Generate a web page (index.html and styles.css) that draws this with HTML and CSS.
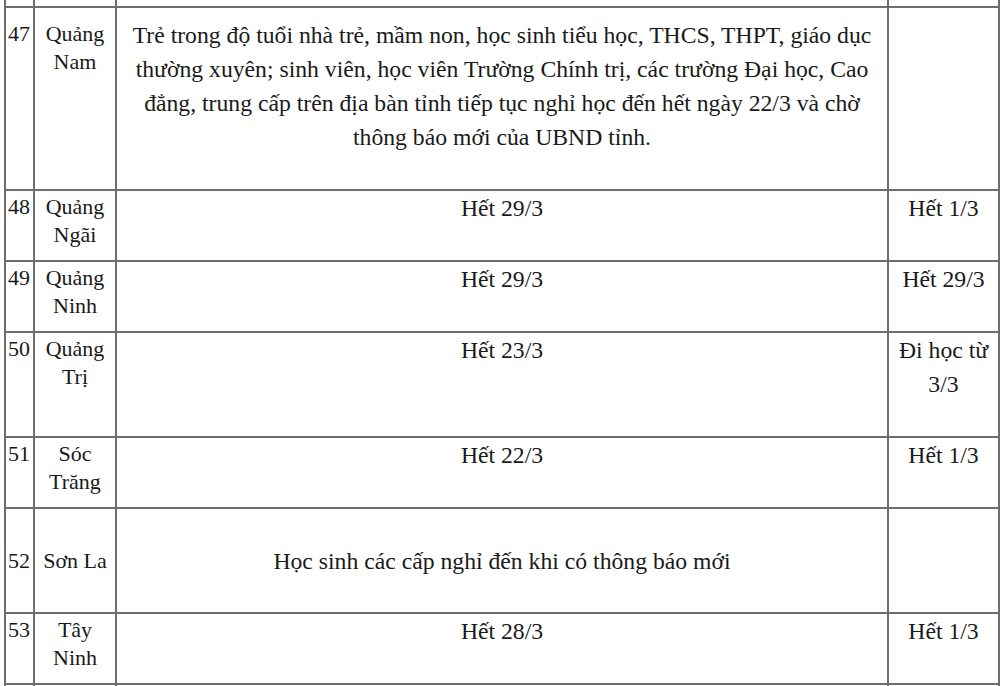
FILE: index.html
```html
<!DOCTYPE html>
<html lang="vi">
<head>
<meta charset="utf-8">
<title>Lịch nghỉ học</title>
<link rel="stylesheet" href="styles.css">
</head>
<body>
<table class="schedule">
  <colgroup>
    <col class="c-num">
    <col class="c-prov">
    <col class="c-main">
    <col class="c-last">
  </colgroup>
  <tbody>
    <tr class="r-stub r-top"><td></td><td></td><td></td><td></td></tr>
    <tr class="r-47">
      <td class="num">47</td>
      <td class="prov">Quảng<br>Nam</td>
      <td class="main">Trẻ trong độ tuổi nhà trẻ, mầm non, học sinh tiểu học, THCS, THPT, giáo dục<br>thường xuyên; sinh viên, học viên Trường Chính trị, các trường Đại học, Cao<br>đẳng, trung cấp trên địa bàn tỉnh tiếp tục nghỉ học đến hết ngày 22/3 và chờ<br>thông báo mới của UBND tỉnh.</td>
      <td class="last"></td>
    </tr>
    <tr class="r-s">
      <td class="num">48</td>
      <td class="prov">Quảng<br>Ngãi</td>
      <td class="main">Hết 29/3</td>
      <td class="last">Hết 1/3</td>
    </tr>
    <tr class="r-s">
      <td class="num">49</td>
      <td class="prov">Quảng<br>Ninh</td>
      <td class="main">Hết 29/3</td>
      <td class="last">Hết 29/3</td>
    </tr>
    <tr class="r-l">
      <td class="num">50</td>
      <td class="prov">Quảng<br>Trị</td>
      <td class="main">Hết 23/3</td>
      <td class="last">Đi học từ<br>3/3</td>
    </tr>
    <tr class="r-s">
      <td class="num">51</td>
      <td class="prov">Sóc<br>Trăng</td>
      <td class="main">Hết 22/3</td>
      <td class="last">Hết 1/3</td>
    </tr>
    <tr class="r-l r-mid">
      <td class="num">52</td>
      <td class="prov">Sơn La</td>
      <td class="main">Học sinh các cấp nghỉ đến khi có thông báo mới</td>
      <td class="last"></td>
    </tr>
    <tr class="r-s">
      <td class="num">53</td>
      <td class="prov">Tây<br>Ninh</td>
      <td class="main">Hết 28/3</td>
      <td class="last">Hết 1/3</td>
    </tr>
    <tr class="r-stub r-bottom"><td></td><td></td><td></td><td></td></tr>
  </tbody>
</table>
</body>
</html>
```

FILE: styles.css
```css
html, body {
  margin: 0;
  padding: 0;
  background: #ffffff;
}

body {
  overflow: hidden;
  height: 686px;
}

.schedule {
  margin-left: 4px;
  width: 994px;
  border-collapse: collapse;
  table-layout: fixed;
  font-family: "Liberation Serif", "Times New Roman", serif;
  color: #1a1a1a;
}

.c-num { width: 29px; }
.c-prov { width: 82px; }
.c-main { width: 772px; }
.c-last { width: 111px; }

.schedule td {
  border: 2px solid #6e6e6e;
  padding: 0;
  vertical-align: top;
  text-align: center;
}

.schedule .r-stub td {
  height: 6px;
}

.schedule .r-top td {
  border-top: none;
}

.schedule .r-bottom td {
  border-bottom: none;
}

.r-47 { height: 183px; }
.r-s { height: 71px; }
.r-l { height: 105px; }

.schedule td.num {
  font-size: 22px;
  line-height: 28px;
  text-align: left;
  padding: 2px 0 0 2px;
}

.schedule td.prov {
  font-size: 22px;
  line-height: 28px;
  padding-top: 2px;
}

.schedule td.main,
.schedule td.last {
  font-size: 23.7px;
  line-height: 34px;
}

.schedule .r-47 td {
  padding-top: 10px;
}

.schedule .r-47 td.num,
.schedule .r-47 td.prov {
  padding-top: 12px;
}

.schedule .r-mid td {
  vertical-align: middle;
  padding-top: 0;
}
```
